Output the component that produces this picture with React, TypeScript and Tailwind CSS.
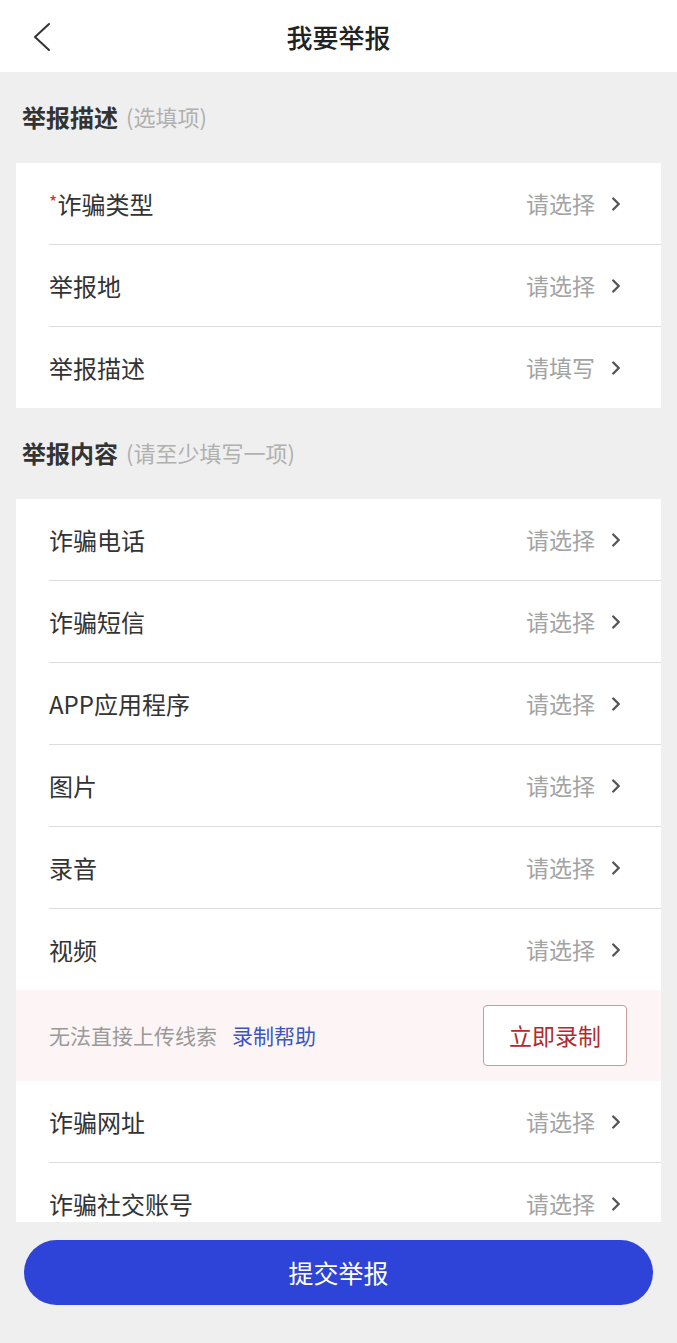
import { ChevronRight } from 'lucide-react';

const FONT = { fontFamily: '"Noto Sans CJK SC", "Noto Sans", sans-serif' };

type Row = { label: string; hint: string; required?: boolean };

const DESC_ROWS: Row[] = [
  { label: '诈骗类型', hint: '请选择', required: true },
  { label: '举报地', hint: '请选择' },
  { label: '举报描述', hint: '请填写' },
];

const CONTENT_TOP: Row[] = [
  { label: '诈骗电话', hint: '请选择' },
  { label: '诈骗短信', hint: '请选择' },
  { label: 'APP应用程序', hint: '请选择' },
  { label: '图片', hint: '请选择' },
  { label: '录音', hint: '请选择' },
  { label: '视频', hint: '请选择' },
];

const CONTENT_BOTTOM: Row[] = [
  { label: '诈骗网址', hint: '请选择' },
  { label: '诈骗社交账号', hint: '请选择' },
];

function ListRow({ row, last }: { row: Row; last?: boolean }) {
  return (
    <div className="pl-[33px]">
      <div
        className={`flex items-center justify-between pr-[34px] ${
          last ? 'h-[81px]' : 'h-[82px] border-b border-[#dcdcdc]'
        }`}
      >
        <span className="text-[24px] text-[#333] flex items-center">
          {row.required && <span className="text-[#e0302c] text-[18px] self-start mt-[2px]">*</span>}
          {row.label}
        </span>
        <div className="flex items-center gap-[10px]">
          <span className="text-[23px] text-[#a3a3a3]">{row.hint}</span>
          <ChevronRight className="w-[22px] h-[22px] text-[#555]" strokeWidth={2.6} />
        </div>
      </div>
    </div>
  );
}

function SectionLabel({ title, note }: { title: string; note: string }) {
  return (
    <div className="h-[91px] flex items-center pl-[22px] pb-[2px]">
      <span className="text-[24px] font-bold text-[#333]">{title}</span>
      <span className="text-[22px] text-[#b0b0b0] ml-[8px]">{note}</span>
    </div>
  );
}

export default function App() {
  return (
    <div className="w-[677px] h-[1343px] bg-[#efefef] flex flex-col" style={FONT}>
      {/* Header */}
      <div className="h-[72px] bg-white relative flex items-center justify-center shrink-0">
        <svg
          className="absolute left-[32px] top-[22px]"
          width="20"
          height="30"
          viewBox="0 0 20 30"
          fill="none"
          stroke="#333"
          strokeWidth="2"
          strokeLinecap="round"
          strokeLinejoin="round"
        >
          <polyline points="17,2 3,15 17,28" />
        </svg>
        <span className="text-[26px] font-medium text-[#222]">我要举报</span>
      </div>

      {/* Scroll area */}
      <div className="h-[1150px] overflow-hidden shrink-0">
        <SectionLabel title="举报描述" note="(选填项)" />
        <div className="mx-[16px] bg-white">
          {DESC_ROWS.map((r, i) => (
            <ListRow key={r.label} row={r} last={i === DESC_ROWS.length - 1} />
          ))}
        </div>

        <SectionLabel title="举报内容" note="(请至少填写一项)" />
        <div className="mx-[16px] bg-white">
          {CONTENT_TOP.map((r, i) => (
            <ListRow key={r.label} row={r} last={i === CONTENT_TOP.length - 1} />
          ))}
          <div className="h-[91px] bg-[#fdf5f5] flex items-center justify-between pl-[33px] pr-[34px]">
            <div className="flex items-center gap-[15px]">
              <span className="text-[21px] text-[#999]">无法直接上传线索</span>
              <span className="text-[21px] text-[#3b55c4]">录制帮助</span>
            </div>
            <button className="w-[144px] h-[61px] bg-white border border-[#c99a9a] rounded-[4px] text-[23px] text-[#b22a2a]">
              立即录制
            </button>
          </div>
          {CONTENT_BOTTOM.map((r, i) => (
            <ListRow key={r.label} row={r} last={i === CONTENT_BOTTOM.length - 1} />
          ))}
        </div>
      </div>

      {/* Submit */}
      <div className="px-[24px] pt-[18px]">
        <button className="w-full h-[65px] rounded-full bg-[#2e43d8] text-white text-[25px]">
          提交举报
        </button>
      </div>
    </div>
  );
}
